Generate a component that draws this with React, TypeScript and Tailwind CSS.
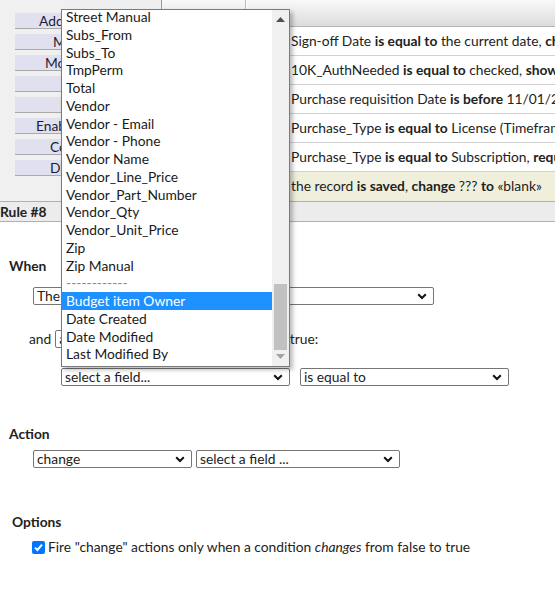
import React from 'react';

// label, left padding so the visible start matches the page behind the open list
const buttons: [string, string][] = [
  ['Add New Rule', 'pl-[24px]'],
  ['Move Up', 'pl-[38px]'],
  ['Move Down', 'pl-[30px]'],
  ['', 'pl-[30px]'],
  ['Delete', 'pl-[45px]'],
  ['Enable / Disable', 'pl-[21px]'],
  ['Copy Rule', 'pl-[35px]'],
  ['Disable', 'pl-[35px]'],
];

const fields = [
  'Street Manual', 'Subs_From', 'Subs_To', 'TmpPerm', 'Total', 'Vendor', 'Vendor - Email', 'Vendor - Phone',
  'Vendor Name', 'Vendor_Line_Price', 'Vendor_Part_Number', 'Vendor_Qty', 'Vendor_Unit_Price', 'Zip', 'Zip Manual',
  '------------', 'Budget item Owner', 'Date Created', 'Date Modified', 'Last Modified By',
];

function Chevron() {
  return (
    <svg width="10" height="7" viewBox="0 0 10 7" className="shrink-0">
      <path d="M1.2 1.3 L5 5 L8.8 1.3" fill="none" stroke="#111" strokeWidth="2" />
    </svg>
  );
}

function Select({ value, className }: { value: string; className: string }) {
  return (
    <div className={`h-[18px] flex items-center justify-between border border-[#767676] rounded-[2px] bg-white pl-[3px] pr-[6px] text-[#222] whitespace-nowrap overflow-hidden ${className}`}>
      <span>{value}</span>
      <Chevron />
    </div>
  );
}

export default function App() {
  return (
    <div className="relative w-[555px] h-[592px] overflow-hidden bg-white text-[13.8px] text-[#222] font-['Lato','Liberation_Sans',sans-serif]">
      {/* top: rule list */}
      <div className="flex h-[201px] bg-[#f0f0f0]">
        <div className="w-[161px] shrink-0 pt-[13px] pl-[15px] flex flex-col gap-[5px]">
          {buttons.map(([b, pad], i) => (
            <div
              key={i}
              className={`h-[16px] w-[146px] bg-[#e0e0ee] border-b border-[#a9a9a9] leading-[15px] whitespace-nowrap overflow-hidden ${pad} ${b === 'Delete' ? 'text-[#b07800]' : 'text-[#1b1b3a]'}`}
            >
              {b}
            </div>
          ))}
        </div>
        <div className="flex-1 flex flex-col bg-white border-l border-[#9a9a9a] min-w-0">
          <div className="h-[27px] flex bg-gradient-to-b from-[#f9f9f9] to-[#dcdcdc] border-b border-[#b5b5b5]">
            <div className="w-[84px] border-r border-[#b8b8b8]" />
            <div className="flex-1 border-l border-white" />
          </div>
          {[
            <>Sign-off Date <b>is equal to</b> the current date, <b>change</b> Status</>,
            <>10K_AuthNeeded <b>is equal to</b> checked, <b>show</b> field</>,
            <>Purchase requisition Date <b>is before</b> 11/01/2020</>,
            <>Purchase_Type <b>is equal to</b> License (Timeframe)</>,
            <>Purchase_Type <b>is equal to</b> Subscription, <b>require</b></>,
          ].map((r, i) => (
            <div key={i} className="h-[29px] shrink-0 flex items-center pl-[129px] border-b border-[#d2d2d2] whitespace-nowrap overflow-hidden">
              <span>{r}</span>
            </div>
          ))}
          <div className="h-[29px] shrink-0 flex items-center pl-[129px] bg-[#efefdc] whitespace-nowrap overflow-hidden">
            <span>
              the record <b>is saved</b>, <b>change</b> ??? <b>to</b> «blank»
            </span>
          </div>
        </div>
      </div>

      {/* rule header */}
      <div className="h-[21px] bg-[#ececec] border-t border-[#9c9c9c] border-b border-[#b0b0b0] font-bold leading-[19px]">
        Rule #8
      </div>

      {/* when */}
      <div className="mt-[36px] ml-[9px] h-[16px] leading-[16px] font-bold">When</div>
      <Select value="The record is saved" className="mt-[13px] ml-[33px] w-[401px]" />
      <div className="mt-[25px] ml-[29px] h-[18px] flex items-center whitespace-nowrap">
        <span>and</span>
        <Select value="all" className="ml-[4px] w-[40px]" />
        <span className="ml-[7px]">of the following conditions are true:</span>
      </div>
      <div className="mt-[20px] ml-[61px] flex gap-[10px]">
        <Select value="select a field..." className="w-[229px]" />
        <Select value="is equal to" className="w-[209px]" />
      </div>

      {/* action */}
      <div className="mt-[40px] ml-[9px] h-[16px] leading-[16px] font-bold">Action</div>
      <div className="mt-[8px] ml-[33px] flex gap-[4px]">
        <Select value="change" className="w-[159px]" />
        <Select value="select a field ..." className="w-[204px]" />
      </div>

      {/* options */}
      <div className="mt-[46px] ml-[12px] h-[16px] leading-[16px] font-bold">Options</div>
      <div className="mt-[9px] ml-[32px] h-[16px] flex items-center whitespace-nowrap">
        <span className="w-[13px] h-[13px] shrink-0 rounded-[2px] bg-[#0075ff] flex items-center justify-center">
          <svg width="11" height="11" viewBox="0 0 11 11">
            <path d="M2 5.6 L4.4 8 L9 2.6" fill="none" stroke="white" strokeWidth="2" />
          </svg>
        </span>
        <span className="ml-[3px]">
          Fire "change" actions only when a condition <i>changes</i> from false to true
        </span>
      </div>

      {/* open field list */}
      <div className="absolute left-[61px] top-[9px] w-[229px] h-[358px] flex bg-white border border-[#7a7a7a] shadow-[3px_3px_4px_rgba(0,0,0,0.25)] overflow-hidden">
        <div className="flex-1 -mt-[2px]">
          {fields.map((f) => (
            <div
              key={f}
              className={`h-[17.75px] leading-[17.75px] pl-[4px] whitespace-nowrap ${
                f === 'Budget item Owner' ? 'bg-[#1e90ff] text-white' : f.startsWith('-') ? 'text-[#888]' : 'text-[#1a1a1a]'
              }`}
            >
              {f}
            </div>
          ))}
        </div>
        <div className="relative w-[17px] bg-[#f0f0f0]">
          <svg width="9" height="5" viewBox="0 0 9 5" className="absolute left-[4px] top-[7px]">
            <path d="M0 5 L4.5 0 L9 5 Z" fill="#505050" />
          </svg>
          <div className="absolute left-[2px] right-[2px] top-[274px] h-[66px] bg-[#c1c1c1]" />
          <svg width="9" height="5" viewBox="0 0 9 5" className="absolute left-[4px] bottom-[7px]">
            <path d="M0 0 L4.5 5 L9 0 Z" fill="#a3a3a3" />
          </svg>
        </div>
      </div>
    </div>
  );
}
